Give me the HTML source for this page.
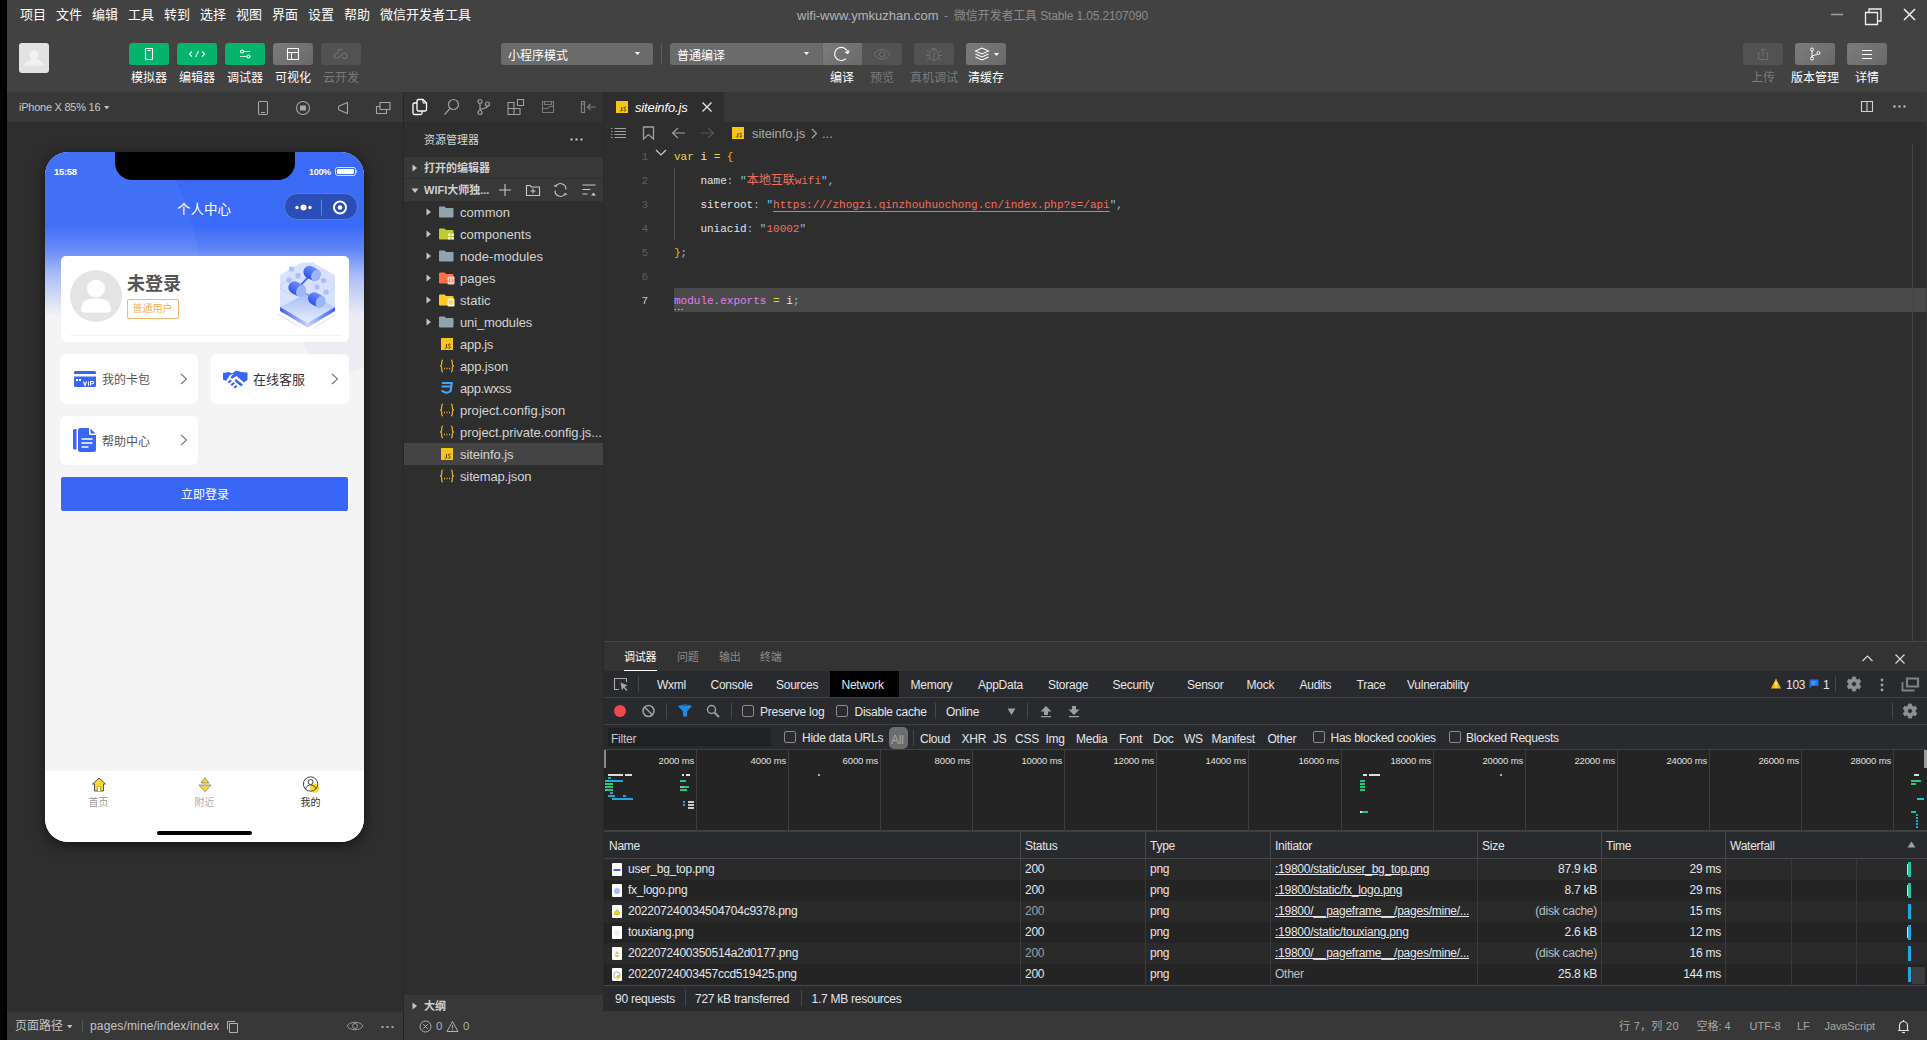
<!DOCTYPE html>
<html lang="zh-CN">
<head>
<meta charset="utf-8">
<title>微信开发者工具</title>
<style>
*{box-sizing:border-box;margin:0;padding:0}
html,body{width:1927px;height:1040px;overflow:hidden;background:#000}
body{font-family:"Liberation Sans","Noto Sans CJK SC",sans-serif;font-size:12px;color:#fff;position:relative}
.abs,.abs>*{position:absolute}
.t{position:absolute;white-space:nowrap;line-height:1}
svg{position:absolute;overflow:visible}
#win{position:absolute;left:0;top:0;width:1927px;height:1040px;background:#424242;overflow:hidden}
/* ---- top bars ---- */
#menu .t{top:8px;font-size:13px;color:#fff}
.tb{position:absolute;top:43px;width:40px;height:22px;border-radius:3px;background:#04b36c}
.tb.g{background:linear-gradient(135deg,#7b7b7b,#6a6a6a)}
.tb.d{background:#525252}
.tl{position:absolute;top:72px;font-size:12px;line-height:13px;color:#fff;white-space:nowrap;text-align:center;width:60px}
.tl.d{color:#7a7a7a}
.sel{position:absolute;top:43px;height:22px;background:#6b6b6b;border-radius:3px}
.sel .t{left:7px;top:7px;font-size:12px;color:#fff}
/* ---- simulator ---- */
#blk{position:absolute;left:0;top:0;width:7px;height:1040px;background:#000;z-index:50}
#simhead{position:absolute;left:0;top:92px;width:403px;height:30px;background:#383838}
#simbody{position:absolute;left:0;top:122px;width:403px;height:890px;background:#2e2e2e}
#simfoot{position:absolute;left:0;top:1012px;width:403px;height:28px;background:#383838}
#vsplit{position:absolute;left:403px;top:92px;width:1px;height:948px;background:#262626}

#phone{position:absolute;left:45px;top:152px;width:319px;height:690px;border-radius:23px;overflow:hidden;background:#f4f4f4;box-shadow:0 3px 14px rgba(0,0,0,.6)}
#pbg{position:absolute;left:0;top:0;width:319px;height:80px;background:#3a6af6}
#pgrad{position:absolute;left:0;top:74px;width:319px;height:90px;background:linear-gradient(#3a6af6 0%,#5f84f6 25%,#a9bcf6 55%,#f4f4f4 100%)}
#notch{position:absolute;left:70px;top:0;width:180px;height:28px;background:#000;border-radius:0 0 17px 17px}
#capsule{position:absolute;left:239px;top:41px;width:74px;height:27px;border-radius:14px;background:#2a4db8;border:1px solid #5c7cd6}
#ptab{position:absolute;left:0;top:619px;width:319px;height:71px;background:#fff}
#homebar{position:absolute;left:112px;top:679px;width:95px;height:4px;border-radius:2px;background:#000}
.pc{position:absolute;background:#fff;border-radius:6px}

/* ---- explorer ---- */
#exicons{position:absolute;left:404px;top:92px;width:199px;height:30px;background:#333}
#exbody{position:absolute;left:404px;top:122px;width:199px;height:890px;background:#2e2e2e}
#exline{position:absolute;left:603px;top:92px;width:1px;height:920px;background:#2b2b2b}
.exsec{position:absolute;left:404px;width:199px;height:22px;background:#383838}
.exsec .t{left:20px;top:6px;font-size:11px;font-weight:bold;color:#d0d0d0}
.fr{position:absolute;left:404px;width:199px;height:22px}
.fr .t{left:56px;top:4.500px;font-size:13px;color:#d4d4d4;letter-spacing:0.050px}
.fr svg.tw{left:22px;top:7px}
.fr svg.ic{left:33.500px;top:3px}

/* ---- editor ---- */
#edtabs{position:absolute;left:604px;top:92px;width:1323px;height:30px;background:#383838}
#edtab{position:absolute;left:604px;top:92px;width:120px;height:30px;background:#2e2e2e}
#edbody{position:absolute;left:604px;top:122px;width:1323px;height:520px;background:#2e2e2e}
.jsi{position:absolute;width:12px;height:12px;background:#f5c518}
.ln{position:absolute;left:620px;margin-top:0.500px;width:28px;text-align:right;font-family:"Liberation Mono",monospace;font-size:11px;line-height:24px;color:#5e5e5e}
.cl{position:absolute;left:674px;margin-top:0.500px;font-family:"Liberation Mono","Noto Sans CJK SC",monospace;font-size:11px;line-height:24px;height:24px;white-space:pre;color:#e4e4e4}
.k{color:#ead23e}.b{color:#f7b500}.s{color:#f2705c}.q{color:#7fc2f8}.m{color:#e77af0}.w{color:#e6e8f4}

/* ---- debugger ---- */
#dbg{position:absolute;left:604px;top:641px;width:1323px;height:371px;background:#202124}
#dbg .t{font-size:12px;color:#e4e6ea;letter-spacing:-0.250px;margin-top:1px}
#dbghead{position:absolute;left:0;top:0;width:1323px;height:30px;background:#333;border-top:1px solid #454545}
.dtrow{position:absolute;left:0;width:1323px;background:#292a2d;border-bottom:1px solid #3f4043}
.vs{position:absolute;width:1px;background:#47484b}
.cb{position:absolute;width:12px;height:12px;border:1px solid #8a8a8a;border-radius:2px;background:#2a2b2e}
.gl{position:absolute;top:109px;width:1px;height:80px;background:#3d3d3d}
.gt{position:absolute;top:113.500px;margin-left:1px;font-size:9.500px !important;color:#e0e0e0 !important;width:80px;text-align:right;letter-spacing:-0.150px !important}
.th{position:absolute;top:190px;height:27px;border-left:1px solid #47484b}
.tr{position:absolute;left:0;width:1323px;height:21px}
.tr .t{top:3px}
.fi{position:absolute;left:8px;top:4px;width:10px;height:13px;overflow:hidden;background:#fff;border-radius:1px}
</style>
</head>
<body>
<div id="win">
<div id="blk"></div>

<!-- ======= MENU BAR ======= -->
<div id="menu">
<span class="t" style="left:20px">项目</span>
<span class="t" style="left:56px">文件</span>
<span class="t" style="left:92px">编辑</span>
<span class="t" style="left:128px">工具</span>
<span class="t" style="left:164px">转到</span>
<span class="t" style="left:200px">选择</span>
<span class="t" style="left:236px">视图</span>
<span class="t" style="left:272px">界面</span>
<span class="t" style="left:308px">设置</span>
<span class="t" style="left:344px">帮助</span>
<span class="t" style="left:380px">微信开发者工具</span>
</div>
<span class="t" style="left:797px;top:9px;font-size:13px;color:#b4b4b4">wifi-www.ymkuzhan.com</span>
<span class="t" style="left:944px;top:10px;font-size:12px;color:#8a8a8a">-</span>
<span class="t" style="left:954px;top:10px;font-size:12px;color:#8a8a8a;letter-spacing:-0.150px">微信开发者工具 Stable 1.05.2107090</span>
<svg style="left:1825px;top:5px" width="100" height="22" viewBox="0 0 100 22" fill="none" stroke="#efefef" stroke-width="1.5">
<path d="M6 9.5H18" stroke="#9a9a9a" stroke-width="1.6"/>
<path d="M40.500 7.500H52.500V19.500H40.500Z M44 7.500V4H56V16H52.500" stroke-width="1.3"/>
<path d="M79 4L90 15M90 4L79 15"/>
</svg>
<!--TITLE-->

<!-- ======= TOOLBAR ======= -->
<div style="position:absolute;left:19px;top:43px;width:30px;height:30px;border-radius:3px;background:#e2e2e2;overflow:hidden">
<svg style="left:0;top:0" width="30" height="30" viewBox="0 0 30 30"><circle cx="15" cy="11.500" r="4.600" fill="#f1f1f1"/><path d="M5.500 22.500C5.500 18.500 10 18 12.500 15.500H17.500C20 18 24.500 18.500 24.500 22.500Z" fill="#f1f1f1"/></svg></div>
<div class="tb" style="left:129px"><svg style="left:0;top:0" width="40" height="22" viewBox="0 0 40 22" fill="none" stroke="#fff" stroke-width="1.1"><rect x="16.500" y="5.500" width="7" height="11" rx="0.500"/><path d="M18.500 7.500H21.500"/></svg></div>
<div class="tb" style="left:177px"><svg style="left:0;top:0" width="40" height="22" viewBox="0 0 40 22" fill="none" stroke="#fff" stroke-width="1.1"><path d="M15 8.500L12.500 11L15 13.500M25 8.500L27.500 11L25 13.500M21.500 8L18.500 14"/></svg></div>
<div class="tb" style="left:225px"><svg style="left:0;top:0" width="40" height="22" viewBox="0 0 40 22" fill="none" stroke="#fff" stroke-width="1.1"><path d="M18.500 8.500H25M15 13.500H21.500" stroke-opacity="0.75"/><circle cx="17" cy="8.500" r="1.500"/><circle cx="23.500" cy="13.500" r="1.500"/></svg></div>
<div class="tb g" style="left:273px"><svg style="left:0;top:0" width="40" height="22" viewBox="0 0 40 22" fill="none" stroke="#fff" stroke-width="1.1"><rect x="14.500" y="5.500" width="11" height="11" rx="0.500"/><path d="M14.500 9.500H25.500M18.500 9.500V16.500"/></svg></div>
<div class="tb d" style="left:321px"><svg style="left:0;top:0" width="40" height="22" viewBox="0 0 40 22" fill="none" stroke="#727272" stroke-width="1.100" stroke-linecap="round"><path d="M20.500 6.400C18.500 6.200 17 7 16.800 8.800L16.600 10.200C14.500 10.300 13.200 11.200 13.200 12.800C13.200 14.500 14.600 15.300 16 15.300C18.500 15.300 20 12 22 10.600C24 9.400 26 10.600 26 12.800C26 14.800 24.300 15.800 23 15.400C22.300 15.200 22 14.800 22 14.400"/></svg></div>
<span class="tl" style="left:119px">模拟器</span>
<span class="tl" style="left:167px">编辑器</span>
<span class="tl" style="left:215px">调试器</span>
<span class="tl" style="left:263px">可视化</span>
<span class="tl d" style="left:311px">云开发</span>

<div class="sel" style="left:501px;width:152px"><span class="t">小程序模式</span><svg style="left:134px;top:9px" width="6" height="4" viewBox="0 0 6 4"><path d="M0 0H5L2.500 3Z" fill="#fff"/></svg></div>
<div style="position:absolute;left:661px;top:43px;width:1px;height:22px;background:#5a5a5a"></div>
<div class="sel" style="left:670px;width:152px;border-radius:3px 0 0 3px"><span class="t">普通编译</span><svg style="left:134px;top:9px" width="6" height="4" viewBox="0 0 6 4"><path d="M0 0H5L2.500 3Z" fill="#fff"/></svg></div>
<div class="tb g" style="left:822px;width:40px;border-radius:0;border-left:1px solid #646464"><svg style="left:-1px;top:0" width="40" height="22" viewBox="0 0 40 22" fill="none" stroke="#fff" stroke-width="1.100"><path d="M25.800 10A6.600 6.600 0 1 0 24 15.600"/><path d="M23 9L25.800 10.400L27.200 7.600"/></svg></div>
<div class="tb d" style="left:862px;border-radius:0 3px 3px 0"><svg style="left:0;top:0" width="40" height="22" viewBox="0 0 40 22" fill="none" stroke="#6e6e6e" stroke-width="1"><path d="M12.200 11.200C15 4.800 25.200 4.800 28 11.200C25.200 17.600 15 17.600 12.200 11.200Z"/><circle cx="20.100" cy="11.200" r="2.700"/></svg></div>
<div class="tb d" style="left:914px"><svg style="left:0;top:0" width="40" height="22" viewBox="0 0 40 22" fill="none" stroke="#6e6e6e" stroke-width="1"><ellipse cx="20" cy="12" rx="4.700" ry="5.500"/><path d="M17.500 7.200A2.600 2.600 0 0 1 22.500 7.200M20 8V17.500M15.500 9.500L12.500 7.500M24.500 9.500L27.500 7.500M15.300 12.500H12M24.700 12.500H28M15.800 15L12.800 17M24.200 15L27.200 17"/></svg></div>
<div class="tb g" style="left:966px"><svg style="left:0;top:0" width="40" height="22" viewBox="0 0 40 22" fill="none" stroke="#fff" stroke-width="1.1"><path d="M9.500 8L16 5L22.500 8L16 11Z"/><path d="M9.500 11L16 14L22.500 11M9.500 14L16 17L22.500 14"/><path d="M28 10H33L30.500 13Z" fill="#fff" stroke="none"/></svg></div>
<span class="tl" style="left:812px">编译</span>
<span class="tl d" style="left:852px">预览</span>
<span class="tl d" style="left:904px">真机调试</span>
<span class="tl" style="left:956px">清缓存</span>

<div class="tb d" style="left:1743px"><svg style="left:0;top:0" width="40" height="22" viewBox="0 0 40 22" fill="none" stroke="#6e6e6e" stroke-width="1"><path d="M17 9.500H15.500V16.500H24.500V9.500H23M20 13.500V5.500M17.500 8L20 5.500L22.500 8"/></svg></div>
<div class="tb g" style="left:1795px"><svg style="left:0;top:0" width="40" height="22" viewBox="0 0 40 22" fill="none" stroke="#fff" stroke-width="1"><circle cx="17" cy="6.500" r="1.500"/><circle cx="17" cy="15.500" r="1.500"/><circle cx="23.500" cy="10" r="1.500"/><path d="M17 8V14M17 14C17 11.500 22 12.500 22.500 11"/></svg></div>
<div class="tb g" style="left:1847px"><svg style="left:0;top:0" width="40" height="22" viewBox="0 0 40 22" fill="none" stroke="#fff" stroke-width="1.1"><path d="M15 7.500H25M15 11.500H25M15 15.500H25"/></svg></div>
<span class="tl d" style="left:1733px">上传</span>
<span class="tl" style="left:1785px">版本管理</span>
<span class="tl" style="left:1837px">详情</span>
<!--TOOLBAR-->

<!-- ======= SIMULATOR ======= -->
<div id="simhead"></div>
<div id="simbody"></div>
<div id="simfoot"></div>
<div id="vsplit"></div>

<span class="t" style="left:19px;top:102px;font-size:11px;color:#c8c8c8;letter-spacing:-0.250px">iPhone X 85% 16</span>
<svg style="left:104px;top:106px" width="6" height="4" viewBox="0 0 6 4"><path d="M0 0H5.500L2.750 3.500Z" fill="#bdbdbd"/></svg>
<svg style="left:255px;top:99px" width="140" height="18" viewBox="0 0 140 18" fill="none" stroke="#a6a6a6" stroke-width="1.100">
<rect x="3.500" y="2.500" width="9" height="13" rx="1.200"/><path d="M6 13.500H10"/>
<circle cx="48" cy="9" r="6.500"/><rect x="45" y="6.500" width="6" height="5" rx="0.500" fill="#a6a6a6" stroke="none"/>
<path d="M84 7L92.500 3.500V14.500L84 11Q83 9 84 7Z" stroke-linejoin="round"/>
<path d="M125 3.500H135V10.500H125Z M125 7.500H121.500V14.500H131.500V10.500"/>
</svg>
<!-- phone -->
<div id="phone">
 <div id="pbg"></div>
 <div id="pgrad"></div>
 <div style="position:absolute;left:-295px;top:-95px;width:450px;height:450px;border-radius:50%;background:rgba(255,255,255,0.045)"></div>
 <div style="position:absolute;left:255px;top:130px;width:90px;height:90px;border-radius:50%;background:rgba(190,198,235,0.140)"></div>
 <div id="notch"></div>
 <span class="t" style="left:9px;top:15px;font-size:9.500px;font-weight:bold;color:#fff;letter-spacing:-0.300px">15:58</span>
 <span class="t" style="left:264px;top:16px;font-size:9px;font-weight:bold;color:#fff;letter-spacing:-0.300px">100%</span>
 <svg style="left:290px;top:15px" width="26" height="10" viewBox="0 0 26 10"><rect x="0.500" y="0.500" width="20" height="8" rx="2" fill="none" stroke="#fff" stroke-opacity="0.800"/><rect x="2" y="2" width="17" height="5" rx="1" fill="#fff"/><path d="M21.500 3V6C22.500 5.700 22.500 3.300 21.500 3Z" fill="#fff"/></svg>
 <span class="t" style="left:132px;top:51px;font-size:13.500px;color:#fff">个人中心</span>
 <div id="capsule"><svg style="left:0;top:0" width="74" height="27" viewBox="0 0 74 27"><circle cx="12" cy="13.500" r="1.700" fill="#fff"/><circle cx="18.500" cy="13.500" r="3" fill="#fff"/><circle cx="25" cy="13.500" r="1.700" fill="#fff"/><path d="M36.500 5.500V21.500" stroke="#fff" stroke-opacity="0.300"/><circle cx="55" cy="13.500" r="6" fill="none" stroke="#fff" stroke-width="2"/><circle cx="55" cy="13.500" r="2.300" fill="#fff"/></svg></div>

 <div class="pc" style="left:16px;top:104px;width:288px;height:86px;border-radius:5px">
  <div style="position:absolute;left:9px;top:14px;width:52px;height:52px;border-radius:50%;background:#e4e4e4;overflow:hidden"><svg style="left:0;top:0" width="52" height="52" viewBox="0 0 52 52"><circle cx="26" cy="18.500" r="9" fill="#fff"/><path d="M11 40C11 30 18 28.500 26 28.500S41 30 41 40C41 42 39 42.500 37 42.500H15C13 42.500 11 42 11 40Z" fill="#fff"/></svg></div>
  <span class="t" style="left:66px;top:19px;font-size:18px;font-weight:bold;color:#555">未登录</span>
  <div style="position:absolute;left:66px;top:43px;width:52px;height:20px;border:1px solid #f7b76b;border-radius:2px"></div>
  <span class="t" style="left:71.500px;top:48px;font-size:10px;color:#f7ad55">普通用户</span>
  <div style="position:absolute;left:9px;top:79px;width:271px;height:1px;background:#f3f3f3"></div>
  <svg style="left:215px;top:4px" width="62" height="72" viewBox="0 0 62 72">
   <defs><linearGradient id="g2" x1="0" y1="0" x2="0" y2="1"><stop offset="0" stop-color="#6f8df8"/><stop offset="1" stop-color="#2f55ea"/></linearGradient>
   <linearGradient id="g3" x1="0" y1="0" x2="0" y2="1"><stop offset="0" stop-color="#a4baf9"/><stop offset="1" stop-color="#e6edff"/></linearGradient>
   <linearGradient id="g4" x1="0" y1="0" x2="1" y2="0"><stop offset="0" stop-color="#3a60ee"/><stop offset="1" stop-color="#c4d2fc"/></linearGradient>
   <linearGradient id="g5" x1="1" y1="0" x2="0" y2="0"><stop offset="0" stop-color="#3a60ee"/><stop offset="1" stop-color="#c4d2fc"/></linearGradient></defs>
   <path d="M2 54L25 68M60.500 54L38 68" stroke="#dfe6ff" stroke-width="1.200" fill="none"/>
   <path d="M4 15L26 2.500H37L59 15V47L31.500 62L4 47Z" fill="#d5dffc" fill-opacity="0.920"/>
   <ellipse cx="31.500" cy="27" rx="27" ry="9" fill="none" stroke="#bccbfa" stroke-width="0.700"/>
   <path d="M4 47L31.500 33L59 47L31.500 63Z" fill="url(#g3)"/>
   <path d="M4 47L31.500 63V67.500L4 51Z" fill="url(#g4)"/>
   <path d="M59 47L31.500 63V67.500L59 51Z" fill="url(#g5)"/>
   <path d="M36 13.300L21 28.800" stroke="#3f63f0" stroke-width="1.800"/><path d="M21 28.800L40.600 39.800" stroke="#8ea6f8" stroke-width="1.800"/>
   <rect x="13" y="6.5" width="5" height="5" rx="1.500" fill="#a5b9fa" fill-opacity="0.850"/><rect x="19.5" y="13" width="5" height="5" rx="1.500" fill="#a5b9fa" fill-opacity="0.850"/><rect x="10.5" y="17.5" width="5" height="5" rx="1.500" fill="#a5b9fa" fill-opacity="0.850"/><rect x="45" y="18" width="5" height="5" rx="1.500" fill="#a5b9fa" fill-opacity="0.850"/><rect x="38.5" y="24.5" width="5" height="5" rx="1.500" fill="#a5b9fa" fill-opacity="0.850"/><rect x="47.5" y="29.5" width="5" height="5" rx="1.500" fill="#a5b9fa" fill-opacity="0.850"/><g transform="translate(36 13.3) rotate(28)"><rect x="-9" y="-6.200" width="18" height="12.400" rx="6.200" fill="url(#g2)"/><ellipse cx="4.500" cy="0" rx="4.500" ry="6.200" fill="#9fb5fb"/></g><g transform="translate(21 28.8) rotate(28)"><rect x="-9" y="-6.200" width="18" height="12.400" rx="6.200" fill="url(#g2)"/><ellipse cx="4.500" cy="0" rx="4.500" ry="6.200" fill="#9fb5fb"/></g><g transform="translate(40.6 39.8) rotate(28)"><rect x="-9" y="-6.200" width="18" height="12.400" rx="6.200" fill="url(#g2)"/><ellipse cx="4.500" cy="0" rx="4.500" ry="6.200" fill="#9fb5fb"/></g>
  </svg>
 </div>
 <div class="pc" style="left:15px;top:202px;width:138px;height:50px">
  <svg style="left:14px;top:17px" width="22" height="16" viewBox="0 0 22 16"><path d="M1.500 0H20.500A1.500 1.500 0 0 1 22 1.500V3H0V1.500A1.500 1.500 0 0 1 1.500 0Z M0 5.500H22V14.500A1.500 1.500 0 0 1 20.500 16H1.500A1.500 1.500 0 0 1 0 14.500Z" fill="#3a66f5"/><path d="M2 8H4V10H2ZM5 8H7V10H5Z" fill="#fff"/><path d="M9.500 10.500L11 14.500L12.500 10.500M14.500 10.500V14.500M16.500 14.500V10.500H18.500A1 1 0 0 1 18.500 12.700H16.500" fill="none" stroke="#fff" stroke-width="1.100"/></svg>
  <span class="t" style="left:42px;top:20px;font-size:12px;color:#555">我的卡包</span>
  <svg style="left:120px;top:19px" width="8" height="12" viewBox="0 0 8 12"><path d="M1 1L6.500 6L1 11" fill="none" stroke="#777" stroke-width="1.100"/></svg>
 </div>
 <div class="pc" style="left:166px;top:202px;width:138px;height:50px">
  <svg style="left:12px;top:16px" width="25" height="19" viewBox="0 0 25 19"><path d="M0 3L6 2L9 3.500L13 0.500L18 2L24.500 2.500V10L21 12.500L13.500 6L9.500 8.500C8 9 7 7.500 8 6.500L10.500 4L7 5L3 11L0 9.500Z" fill="#3a66f5"/><path d="M4.500 12L7.500 9.500L9 11L6 13.500ZM7.500 14.500L10.500 12L12 13.500L9 16ZM10.500 17L13 15L14.500 16.500L12 18.500ZM13 9L20 14.500L18 16.500L11.500 11Z" fill="#3a66f5"/></svg>
  <span class="t" style="left:42px;top:19px;font-size:13px;color:#333">在线客服</span>
  <svg style="left:120px;top:19px" width="8" height="12" viewBox="0 0 8 12"><path d="M1 1L6.500 6L1 11" fill="none" stroke="#777" stroke-width="1.100"/></svg>
 </div>
 <div class="pc" style="left:15px;top:264px;width:138px;height:49px">
  <svg style="left:13px;top:12px" width="24" height="24" viewBox="0 0 24 24"><path d="M0 2.500A1.500 1.500 0 0 1 1.500 1H3.500V21.500H1.500A1.500 1.500 0 0 1 0 20Z" fill="#3a66f5"/><path d="M5 2A2 2 0 0 1 7 0H16V5.500A1.500 1.500 0 0 0 17.500 7H23V22A2 2 0 0 1 21 24H7A2 2 0 0 1 5 22Z M17.500 0.500L22.500 5.500H18.500A1 1 0 0 1 17.500 4.500Z" fill="#3a66f5"/><path d="M8.500 11H19.500M8.500 15H19.500M8.500 19H15.500" stroke="#fff" stroke-width="1.300"/></svg>
  <span class="t" style="left:42px;top:20px;font-size:12px;color:#555">帮助中心</span>
  <svg style="left:120px;top:18px" width="8" height="12" viewBox="0 0 8 12"><path d="M1 1L6.500 6L1 11" fill="none" stroke="#777" stroke-width="1.100"/></svg>
 </div>
 <div style="position:absolute;left:16px;top:325px;width:287px;height:34px;border-radius:2px;background:#3a66f5"></div>
 <span class="t" style="left:136px;top:337px;font-size:12px;color:#fff">立即登录</span>
 <!--CARD-->
 <div id="ptab">
  <svg style="left:46px;top:6px" width="16" height="16" viewBox="0 0 16 16"><path d="M8 1L14.500 7H12.500V14H3.500V7H1.500Z" fill="#fdd835" stroke="#333" stroke-width="0.800" stroke-linejoin="round"/><path d="M6.500 14V10.500A1.500 1.500 0 0 1 9.500 10.500V14" fill="#fff" stroke="#8a7a20" stroke-width="0.600"/></svg>
  <svg style="left:152px;top:6px" width="16" height="16" viewBox="0 0 16 16"><path d="M8 0.800L12 6H4Z" fill="#fdd835" stroke="#555" stroke-width="0.600" stroke-linejoin="round"/><path d="M2 8H14L8 14.800Z" fill="#fdd835" stroke="#555" stroke-width="0.600" stroke-linejoin="round"/></svg>
  <svg style="left:257px;top:5px" width="20" height="18" viewBox="0 0 20 18"><circle cx="12.500" cy="12.300" r="4.500" fill="#fdd835"/><circle cx="8.600" cy="8" r="7.200" fill="none" stroke="#333" stroke-width="0.900"/><circle cx="8.600" cy="6" r="2.500" fill="none" stroke="#333" stroke-width="0.900"/><path d="M3.500 13C4 10 6.500 9 8.600 9S13 10 13.700 12.500" fill="none" stroke="#333" stroke-width="0.900"/></svg>
  <span class="t" style="left:43.500px;top:27px;font-size:10px;color:#9a9a9a">首页</span>
  <span class="t" style="left:149.500px;top:27px;font-size:10px;color:#aaa">附近</span>
  <span class="t" style="left:255.500px;top:27px;font-size:10px;color:#333">我的</span>
 </div>
 <div id="homebar"></div>
</div>
<!--SIM-->

<!-- ======= EXPLORER ======= -->
<div id="exicons">
<svg style="left:7px;top:6px" width="18" height="18" viewBox="0 0 18 18" fill="none" stroke="#fff" stroke-width="1.300" stroke-linejoin="round"><path d="M6 11.500V3A1.500 1.500 0 0 1 7.500 1.500H12L15.500 5V11.500A1.500 1.500 0 0 1 14 13H7.500A1.500 1.500 0 0 1 6 11.500Z"/><path d="M12 1.500V5H15.500" stroke-width="1"/><path d="M6 5H3.500A1.500 1.500 0 0 0 2 6.500V15A1.500 1.500 0 0 0 3.500 16.500H9.500A1.500 1.500 0 0 0 11 15V13"/></svg>
<svg style="left:39px;top:6px" width="18" height="18" viewBox="0 0 18 18" fill="none" stroke="#a0a0a0" stroke-width="1.200"><circle cx="10.500" cy="6.500" r="5"/><path d="M7 10.500L1.500 16.500"/></svg>
<svg style="left:71px;top:6px" width="18" height="18" viewBox="0 0 18 18" fill="none" stroke="#a0a0a0" stroke-width="1.200"><circle cx="5" cy="3.500" r="2"/><circle cx="5" cy="14.500" r="2"/><circle cx="12.500" cy="6" r="2"/><path d="M5 5.500V12.500M12.500 8C12.500 11 5 10 5 12.500"/></svg>
<svg style="left:102px;top:6px" width="18" height="18" viewBox="0 0 18 18" fill="none" stroke="#a0a0a0" stroke-width="1.100"><path d="M2 4.500H8V16.500H2ZM8 10.500H14V16.500H8M2 10.500H8M11.500 1.500H17.500V7.500H11.500Z"/></svg>
<svg style="left:137px;top:8px" width="14" height="14" viewBox="0 0 14 14" fill="none" stroke="#777" stroke-width="1.100"><path d="M1.500 1.500H12.500V12.500H1.500ZM3.500 1.500V4.500H10.500V1.500M1.500 8.500H6C8 8.500 7.500 6.500 9.500 6.500H12.500"/></svg>
<svg style="left:176px;top:8px" width="16" height="14" viewBox="0 0 16 14" fill="none" stroke="#808080" stroke-width="1.200"><path d="M1.500 1.500H4.500V12.500H1.500ZM1.500 4H4.500M15.500 7H8M10.500 4L7.500 7L10.500 10"/></svg>
</div>
<div id="exbody"></div>
<div id="exline"></div>
<span class="t" style="left:424px;top:135px;font-size:11px;color:#d6d6d6">资源管理器</span>
<svg style="left:570px;top:138px" width="14" height="3" viewBox="0 0 14 3"><path d="M0.500 0.500H2.500V2.500H0.500ZM5.500 0.500H7.500V2.500H5.500ZM10.500 0.500H12.500V2.500H10.500Z" fill="#d0d0d0"/></svg>
<div class="exsec" style="top:157px"><svg style="left:8px;top:7px" width="6" height="8" viewBox="0 0 6 8"><path d="M0.500 0.500L5 4L0.500 7.500Z" fill="#c5c5c5"/></svg><span class="t">打开的编辑器</span></div>
<div style="position:absolute;left:404px;top:178px;width:199px;height:1px;background:#303030"></div>
<div class="exsec" style="top:179px"><svg style="left:7px;top:9px" width="8" height="6" viewBox="0 0 8 6"><path d="M0.500 0.500H7.500L4 5Z" fill="#c5c5c5"/></svg><span class="t">WIFI大师独...</span>
<svg style="left:94px;top:4px" width="100" height="14" viewBox="0 0 100 14" fill="none" stroke="#c8c8c8" stroke-width="1.100"><path d="M7 1V13M1 7H13"/><path d="M28.500 2.500H32L33.500 4H41.500V12.500H28.500ZM35 5.500V10.500M32.500 8H37.500"/><path d="M58 3A5.500 5.500 0 0 1 68 6.500M67 11A5.500 5.500 0 0 1 57 7.500M56 2.500L58 3.500L58.500 1.500M69 11.500L67 10.500L66.500 12.500"/><path d="M84.500 2H97.500M84.500 6.500H92.500M84.500 11H89.500" stroke-width="1"/><path d="M93 12.500H98L95.500 9.500Z" fill="#c8c8c8" stroke="none"/></svg></div>
<div class="fr" style="top:201px"><svg class="tw" width="6" height="8" viewBox="0 0 6 8"><path d="M0.500 0.500L5 4L0.500 7.500Z" fill="#c5c5c5"/></svg><svg class="ic" width="18" height="16" viewBox="0 0 18 16"><path d="M2 2.500H6.500L8 4H14.500A1 1 0 0 1 15.500 5V12.500A1 1 0 0 1 14.500 13.500H2A1 1 0 0 1 1 12.500V3.500A1 1 0 0 1 2 2.500Z" fill="#90a4ae"/></svg><span class="t">common</span></div>
<div class="fr" style="top:223px"><svg class="tw" width="6" height="8" viewBox="0 0 6 8"><path d="M0.500 0.500L5 4L0.500 7.500Z" fill="#c5c5c5"/></svg><svg class="ic" width="18" height="16" viewBox="0 0 18 16"><path d="M2 2.500H6.500L8 4H14.500A1 1 0 0 1 15.500 5V12.500A1 1 0 0 1 14.500 13.500H2A1 1 0 0 1 1 12.500V3.500A1 1 0 0 1 2 2.500Z" fill="#c0ca33"/><path d="M10 7.500H12.500V10H10ZM13.500 7.500H16V10H13.500ZM10 11H12.500V13.500H10ZM13.500 11H16V13.500H13.500Z" fill="#f0f4c3"/></svg><span class="t">components</span></div>
<div class="fr" style="top:245px"><svg class="tw" width="6" height="8" viewBox="0 0 6 8"><path d="M0.500 0.500L5 4L0.500 7.500Z" fill="#c5c5c5"/></svg><svg class="ic" width="18" height="16" viewBox="0 0 18 16"><path d="M2 2.500H6.500L8 4H14.500A1 1 0 0 1 15.500 5V12.500A1 1 0 0 1 14.500 13.500H2A1 1 0 0 1 1 12.500V3.500A1 1 0 0 1 2 2.500Z" fill="#90a4ae"/></svg><span class="t">node-modules</span></div>
<div class="fr" style="top:267px"><svg class="tw" width="6" height="8" viewBox="0 0 6 8"><path d="M0.500 0.500L5 4L0.500 7.500Z" fill="#c5c5c5"/></svg><svg class="ic" width="18" height="16" viewBox="0 0 18 16"><path d="M2 2.500H6.500L8 4H14.500A1 1 0 0 1 15.500 5V12.500A1 1 0 0 1 14.500 13.500H2A1 1 0 0 1 1 12.500V3.500A1 1 0 0 1 2 2.500Z" fill="#ff7043"/><rect x="9.500" y="6.500" width="7" height="8" rx="1" fill="#ffccbc"/><path d="M12 9L11 10.500L12 12M14 9L15 10.500L14 12" fill="none" stroke="#e64a19" stroke-width="0.700"/></svg><span class="t">pages</span></div>
<div class="fr" style="top:289px"><svg class="tw" width="6" height="8" viewBox="0 0 6 8"><path d="M0.500 0.500L5 4L0.500 7.500Z" fill="#c5c5c5"/></svg><svg class="ic" width="18" height="16" viewBox="0 0 18 16"><path d="M2 2.500H6.500L8 4H14.500A1 1 0 0 1 15.500 5V12.500A1 1 0 0 1 14.500 13.500H2A1 1 0 0 1 1 12.500V3.500A1 1 0 0 1 2 2.500Z" fill="#ffca28"/><rect x="9.500" y="6.500" width="7" height="8" rx="1" fill="#fff3c4"/><path d="M11 9H15M11 10.500H15M11 12H15" stroke="#f9a825" stroke-width="0.700"/></svg><span class="t">static</span></div>
<div class="fr" style="top:311px"><svg class="tw" width="6" height="8" viewBox="0 0 6 8"><path d="M0.500 0.500L5 4L0.500 7.500Z" fill="#c5c5c5"/></svg><svg class="ic" width="18" height="16" viewBox="0 0 18 16"><path d="M2 2.500H6.500L8 4H14.500A1 1 0 0 1 15.500 5V12.500A1 1 0 0 1 14.500 13.500H2A1 1 0 0 1 1 12.500V3.500A1 1 0 0 1 2 2.500Z" fill="#90a4ae"/></svg><span class="t" style="letter-spacing:-0.15px">uni_modules</span></div>
<div class="fr" style="top:333px"><svg class="ic" width="18" height="16" viewBox="0 0 18 16"><rect x="3" y="2" width="12" height="12" fill="#f5c518"/><path d="M8.500 8V11.500C8.500 12.500 7 12.500 6.800 11.800M12.500 8.500C11.500 7.500 10 8.300 10.500 9.300S12.500 10.500 12.300 11.500S10.500 12.500 10 11.500" fill="none" stroke="#3a3000" stroke-width="0.900"/></svg><span class="t" style="letter-spacing:-0.28px">app.js</span></div>
<div class="fr" style="top:355px"><svg class="ic" width="18" height="16" viewBox="0 0 18 16" fill="none" stroke="#f0b429" stroke-width="1.200"><path d="M5 2C3 2 4 6 3.500 7C3.200 7.800 2 8 2 8S3.200 8.200 3.500 9C4 10 3 14 5 14M13 2C15 2 14 6 14.500 7C14.800 7.800 16 8 16 8S14.800 8.200 14.500 9C14 10 15 14 13 14"/><path d="M6 10.500H7M8.500 10.500H9.500M11 10.500H12" stroke-width="1.400"/></svg><span class="t" style="letter-spacing:-0.12px">app.json</span></div>
<div class="fr" style="top:377px"><svg class="ic" width="18" height="16" viewBox="0 0 18 16"><path d="M4 2H15L13.500 12L8.500 14L3.500 12L3.200 10H5.500L5.700 10.800L8.500 11.800L11.500 10.800L12 7.500H3.500L3.800 5.500H12.300L12.500 4H3.700Z" fill="#42a5f5"/></svg><span class="t" style="letter-spacing:-0.39px">app.wxss</span></div>
<div class="fr" style="top:399px"><svg class="ic" width="18" height="16" viewBox="0 0 18 16" fill="none" stroke="#f0b429" stroke-width="1.200"><path d="M5 2C3 2 4 6 3.500 7C3.200 7.800 2 8 2 8S3.200 8.200 3.500 9C4 10 3 14 5 14M13 2C15 2 14 6 14.500 7C14.800 7.800 16 8 16 8S14.800 8.200 14.500 9C14 10 15 14 13 14"/><path d="M6 10.500H7M8.500 10.500H9.500M11 10.500H12" stroke-width="1.400"/></svg><span class="t" style="letter-spacing:0.03px">project.config.json</span></div>
<div class="fr" style="top:421px"><svg class="ic" width="18" height="16" viewBox="0 0 18 16" fill="none" stroke="#f0b429" stroke-width="1.200"><path d="M5 2C3 2 4 6 3.500 7C3.200 7.800 2 8 2 8S3.200 8.200 3.500 9C4 10 3 14 5 14M13 2C15 2 14 6 14.500 7C14.800 7.800 16 8 16 8S14.800 8.200 14.500 9C14 10 15 14 13 14"/><path d="M6 10.500H7M8.500 10.500H9.500M11 10.500H12" stroke-width="1.400"/></svg><span class="t" style="letter-spacing:-0.07px">project.private.config.js...</span></div>
<div class="fr" style="left:404px;top:443px;background:#444"><svg class="ic" width="18" height="16" viewBox="0 0 18 16"><rect x="3" y="2" width="12" height="12" fill="#f5c518"/><path d="M8.500 8V11.500C8.500 12.500 7 12.500 6.800 11.800M12.500 8.500C11.500 7.500 10 8.300 10.500 9.300S12.500 10.500 12.300 11.500S10.500 12.500 10 11.500" fill="none" stroke="#3a3000" stroke-width="0.900"/></svg><span class="t" style="letter-spacing:-0.07px">siteinfo.js</span></div>
<div class="fr" style="top:465px"><svg class="ic" width="18" height="16" viewBox="0 0 18 16" fill="none" stroke="#f0b429" stroke-width="1.200"><path d="M5 2C3 2 4 6 3.500 7C3.200 7.800 2 8 2 8S3.200 8.200 3.500 9C4 10 3 14 5 14M13 2C15 2 14 6 14.500 7C14.800 7.800 16 8 16 8S14.800 8.200 14.500 9C14 10 15 14 13 14"/><path d="M6 10.500H7M8.500 10.500H9.500M11 10.500H12" stroke-width="1.400"/></svg><span class="t" style="letter-spacing:-0.13px">sitemap.json</span></div>
<div class="exsec" style="top:995px;height:17px"><svg style="left:8px;top:7px" width="6" height="8" viewBox="0 0 6 8"><path d="M0.500 0.500L5 4L0.500 7.500Z" fill="#c5c5c5"/></svg><span class="t" style="top:6px">大纲</span></div>
<!--EXPLORER-->

<!-- ======= EDITOR ======= -->
<div id="edtabs"></div><div id="edtab"></div><div id="edbody"></div>
<div class="jsi" style="left:616px;top:101px"><svg style="left:0;top:0" width="12" height="12" viewBox="0 0 12 12"><path d="M5.800 6V9.300C5.800 10.300 4.500 10.300 4.200 9.600M9.800 6.500C9 5.700 7.600 6.300 8 7.200S9.900 8.200 9.700 9.200S8 10.200 7.500 9.400" fill="none" stroke="#3a3000" stroke-width="0.900"/></svg></div>
<span class="t" style="left:635px;top:101px;font-size:13px;font-style:italic;color:#fff;letter-spacing:-0.150px">siteinfo.js</span>
<svg style="left:702px;top:102px" width="10" height="10" viewBox="0 0 10 10"><path d="M0.500 0.500L9.500 9.500M9.500 0.500L0.500 9.500" stroke="#e8e8e8" stroke-width="1.300"/></svg>
<svg style="left:1860px;top:100px" width="14" height="13" viewBox="0 0 14 13" fill="none" stroke="#d0d0d0" stroke-width="1.100"><path d="M1.500 1.500H12.500V11.500H1.500ZM7 1.500V11.500"/></svg>
<svg style="left:1893px;top:105px" width="14" height="3" viewBox="0 0 14 3"><path d="M0.500 0.500H2.500V2.500H0.500ZM5.500 0.500H7.500V2.500H5.500ZM10.500 0.500H12.500V2.500H10.500Z" fill="#d0d0d0"/></svg>
<svg style="left:610px;top:126px" width="110" height="15" viewBox="0 0 110 15" fill="none" stroke="#a0a0a0" stroke-width="1.100">
<path d="M1 2.500H2.500M4.500 2.500H16M1 5.500H2.500M4.500 5.500H16M1 8.500H2.500M4.500 8.500H16M1 11.500H2.500M4.500 11.500H16" stroke-width="1"/>
<path d="M33.500 1H43.500V13L38.500 8.500L33.500 13Z" stroke-width="1.300"/>
<path d="M75 7H63M68 2L62.500 7L68 12"/>
<path d="M91 7H103M98 2L103.500 7L98 12" stroke="#585858"/>
</svg>
<div class="jsi" style="left:732px;top:127px"><svg style="left:0;top:0" width="12" height="12" viewBox="0 0 12 12"><path d="M5.800 6V9.300C5.800 10.300 4.500 10.300 4.200 9.600M9.800 6.500C9 5.700 7.600 6.300 8 7.200S9.900 8.200 9.700 9.200S8 10.200 7.500 9.400" fill="none" stroke="#3a3000" stroke-width="0.900"/></svg></div>
<span class="t" style="left:752px;top:127px;font-size:13px;color:#a9a9a9;letter-spacing:-0.100px">siteinfo.js</span>
<svg style="left:811px;top:128px" width="7" height="11" viewBox="0 0 7 11"><path d="M1 1L5.500 5.500L1 10" fill="none" stroke="#a9a9a9" stroke-width="1.100"/></svg>
<span class="t" style="left:822px;top:127px;font-size:13px;color:#a9a9a9">...</span>
<div style="position:absolute;left:674px;top:288px;width:1253px;height:24px;background:#4a4a4a"></div>
<div style="position:absolute;left:674px;top:168px;width:1px;height:72px;background:#505050"></div>
<svg style="left:655px;top:149px" width="12" height="7" viewBox="0 0 12 7"><path d="M1 1L6 6L11 1" fill="none" stroke="#c8d0e0" stroke-width="1.100"/></svg>
<span class="ln" style="top:144px">1</span><span class="cl" style="top:144px"><span class="k">var</span> <span class="w">i</span> <span class="k">=</span> <span class="b">{</span></span>
<span class="ln" style="top:168px">2</span><span class="cl" style="top:168px">    name<span class="q">: "</span><span class="s"><span style="font-size:12px">本地互联</span>wifi</span><span class="q">",</span></span>
<span class="ln" style="top:192px">3</span><span class="cl" style="top:192px">    siteroot<span class="q">: "</span><span class="s" style="text-decoration:underline;text-underline-offset:3px">https:///zhogzi.qinzhouhuochong.cn/index.php?s=/api</span><span class="q">",</span></span>
<span class="ln" style="top:216px">4</span><span class="cl" style="top:216px">    uniacid<span class="q">: "</span><span class="s">10002</span><span class="q">"</span></span>
<span class="ln" style="top:240px">5</span><span class="cl" style="top:240px"><span class="b">}</span><span class="q">;</span></span>
<span class="ln" style="top:264px">6</span><span class="cl" style="top:264px"></span>
<span class="ln" style="top:288px;color:#c6c6c6">7</span><span class="cl" style="top:288px"><span class="m">module</span><span class="q">.</span><span class="m">exports</span> <span class="k">=</span> <span class="w">i</span><span class="q">;</span></span>
<svg style="left:674px;top:309px" width="12" height="2" viewBox="0 0 12 2"><path d="M0.500 0.500H2M4 0.500H5.500M7.500 0.500H9" stroke="#bdbdbd" stroke-width="1.200"/></svg>
<div style="position:absolute;left:1912px;top:144px;width:1px;height:498px;background:#454545"></div>

<div style="position:absolute;left:1926px;top:92px;width:1px;height:948px;background:#3a3a3a"></div>
<!--EDITOR-->

<!-- ======= DEBUGGER ======= -->
<div id="dbg">
<div id="dbghead"></div>
<span class="t" style="left:20px;top:10px;font-size:11px;color:#fff">调试器</span><div style="position:absolute;left:20px;top:29px;width:33px;height:1px;background:#fff"></div><span class="t" style="left:73px;top:10px;font-size:11px;color:#8c8c8c">问题</span><span class="t" style="left:115px;top:10px;font-size:11px;color:#8c8c8c">输出</span><span class="t" style="left:156px;top:10px;font-size:11px;color:#8c8c8c">终端</span><svg style="left:1258px;top:13px" width="46" height="10" viewBox="0 0 46 10" fill="none" stroke="#d8d8d8" stroke-width="1.200"><path d="M0.500 7L5.500 2L10.500 7M33.500 0.500L42.500 9.500M42.500 0.500L33.500 9.500"/></svg>
<div class="dtrow" style="top:30px;height:27px"></div><div style="position:absolute;left:226px;top:30px;width:69px;height:26px;background:#000"></div><svg style="left:10px;top:36px" width="16" height="16" viewBox="0 0 16 16" fill="none" stroke="#a8a8a8" stroke-width="1.100"><path d="M12.500 5V1.500H0.500V12.500H5"/><path d="M6.500 5.500L13.500 8.500L10.500 9.800L13.500 13L12.500 14L9.500 10.800L8 13.500Z" fill="#a8a8a8" stroke="none"/></svg><div class="vs" style="left:34px;top:35px;height:16px"></div><span class="t" style="left:53px;top:37px;">Wxml</span><span class="t" style="left:106.5px;top:37px;">Console</span><span class="t" style="left:172px;top:37px;">Sources</span><span class="t" style="left:237.5px;top:37px;">Network</span><span class="t" style="left:306.5px;top:37px;">Memory</span><span class="t" style="left:374px;top:37px;">AppData</span><span class="t" style="left:444px;top:37px;">Storage</span><span class="t" style="left:508.5px;top:37px;">Security</span><span class="t" style="left:583px;top:37px;">Sensor</span><span class="t" style="left:642.5px;top:37px;">Mock</span><span class="t" style="left:695.5px;top:37px;">Audits</span><span class="t" style="left:752.5px;top:37px;">Trace</span><span class="t" style="left:803px;top:37px;">Vulnerability</span>
<svg style="left:1166px;top:36px" width="30" height="14" viewBox="0 0 30 14"><path d="M6 1.500L11 11.500H1Z" fill="#f4bd00"/><path d="M6 5V8.300M6 9.300V10.500" stroke="#fff" stroke-width="1.200"/></svg><span class="t" style="left:1182px;top:37px;">103</span><svg style="left:1205px;top:38px" width="10" height="10" viewBox="0 0 10 10"><path d="M0.500 0.500H9.500V7H3L0.500 9.500Z" fill="#1a73e8"/><path d="M2.500 3H7.500M2.500 5H6" stroke="#9cc4f7" stroke-width="0.800"/></svg><span class="t" style="left:1219px;top:37px;">1</span><div class="vs" style="left:1231px;top:35px;height:16px"></div><svg style="left:1242px;top:34.500px" width="16" height="16" viewBox="0 0 16 16"><path d="M9.90 3.05L9.50 0.96L6.50 0.96L6.10 3.05L4.66 3.88L2.65 3.18L1.15 5.78L2.77 7.17L2.77 8.83L1.15 10.22L2.65 12.82L4.66 12.12L6.10 12.95L6.50 15.04L9.50 15.04L9.90 12.95L11.34 12.12L13.35 12.82L14.85 10.22L13.23 8.83L13.23 7.17L14.85 5.78L13.35 3.18L11.34 3.88Z M5.50 8.00A2.50 2.50 0 1 0 10.50 8.00A2.50 2.50 0 1 0 5.50 8.00Z" fill="#8f9093" fill-rule="evenodd" stroke="#8f9093" stroke-width="0.8" stroke-linejoin="round"/></svg><svg style="left:1276px;top:37px" width="4" height="14" viewBox="0 0 4 14" fill="#9aa0a6"><circle cx="2" cy="2" r="1.400"/><circle cx="2" cy="7" r="1.400"/><circle cx="2" cy="12" r="1.400"/></svg><svg style="left:1297px;top:36px" width="18" height="14" viewBox="0 0 18 14" fill="none" stroke="#808184" stroke-width="1.800"><path d="M6 1.500H17V9.500H6Z" stroke-width="2.200"/><path d="M1.500 5V13.500H13.500"/></svg>
<div class="dtrow" style="top:57px;height:27px"></div><svg style="left:8px;top:62px" width="120" height="16" viewBox="0 0 120 16"><circle cx="8" cy="8" r="6" fill="#f0494d"/><circle cx="36.500" cy="8" r="5.500" fill="none" stroke="#9aa0a6" stroke-width="1.600"/><path d="M32.500 4L40.500 12" stroke="#9aa0a6" stroke-width="1.600"/><path d="M66 3H80L75 8.500V13.500H71V8.500Z" fill="#1a8ce8"/><path d="M66.500 3.500C70 1.500 76 1.500 79.500 3.500" fill="none" stroke="#1a8ce8" stroke-width="1.200"/><circle cx="99.500" cy="6.500" r="4" fill="none" stroke="#9aa0a6" stroke-width="1.500"/><path d="M102.500 9.500L107 14" stroke="#9aa0a6" stroke-width="1.800"/></svg><div class="vs" style="left:62px;top:62px;height:16px"></div><div class="vs" style="left:127px;top:62px;height:16px"></div><div class="cb" style="left:138px;top:64px"></div><span class="t" style="left:156px;top:64px;">Preserve log</span><div class="cb" style="left:232px;top:64px"></div><span class="t" style="left:250.5px;top:64px;">Disable cache</span><div class="vs" style="left:331px;top:62px;height:16px"></div><span class="t" style="left:342px;top:64px;">Online</span><svg style="left:403px;top:67px" width="80" height="12" viewBox="0 0 80 12" fill="#9aa0a6"><path d="M0.500 0.500H8.500L4.500 7Z"/><g transform="translate(0 -2)"><path d="M39 0L44.500 5.500H41V9H37V5.500H33.500ZM34 10H44V11.200H34Z"/><path d="M65 0H69V3.500H72.500L67 9L61.500 3.500H65ZM62 10H72V11.200H62Z"/></g></svg><div class="vs" style="left:423px;top:62px;height:16px"></div><div class="vs" style="left:1288px;top:62px;height:16px"></div><svg style="left:1298px;top:61.500px" width="16" height="16" viewBox="0 0 16 16"><path d="M9.90 3.05L9.50 0.96L6.50 0.96L6.10 3.05L4.66 3.88L2.65 3.18L1.15 5.78L2.77 7.17L2.77 8.83L1.15 10.22L2.65 12.82L4.66 12.12L6.10 12.95L6.50 15.04L9.50 15.04L9.90 12.95L11.34 12.12L13.35 12.82L14.85 10.22L13.23 8.83L13.23 7.17L14.85 5.78L13.35 3.18L11.34 3.88Z M5.50 8.00A2.50 2.50 0 1 0 10.50 8.00A2.50 2.50 0 1 0 5.50 8.00Z" fill="#8f9093" fill-rule="evenodd" stroke="#8f9093" stroke-width="0.8" stroke-linejoin="round"/></svg>
<div class="dtrow" style="top:84px;height:25px"></div><div style="position:absolute;left:4px;top:87px;width:163px;height:18px;background:#202124"></div><span class="t" style="left:7px;top:91px;color:#c4c7cc">Filter</span><div class="cb" style="left:180px;top:90px"></div><span class="t" style="left:198px;top:90px;">Hide data URLs</span><div style="position:absolute;left:285px;top:86px;width:19px;height:22px;border-radius:5px;background:#6b6c6f"></div><span class="t" style="left:287px;top:92px;color:#a6a8ab">All</span><div class="vs" style="left:309px;top:89px;height:16px"></div><span class="t" style="left:316px;top:91px;">Cloud</span><span class="t" style="left:357.5px;top:91px;">XHR</span><span class="t" style="left:389px;top:91px;">JS</span><span class="t" style="left:411px;top:91px;">CSS</span><span class="t" style="left:441.5px;top:91px;">Img</span><span class="t" style="left:472px;top:91px;">Media</span><span class="t" style="left:515px;top:91px;">Font</span><span class="t" style="left:549px;top:91px;">Doc</span><span class="t" style="left:580px;top:91px;">WS</span><span class="t" style="left:607.5px;top:91px;">Manifest</span><span class="t" style="left:663.5px;top:91px;">Other</span><div class="cb" style="left:709px;top:90px"></div><span class="t" style="left:726.5px;top:90px;">Has blocked cookies</span><div class="cb" style="left:845px;top:90px"></div><span class="t" style="left:862px;top:90px;">Blocked Requests</span>
<div style="position:absolute;left:0;top:109px;width:1323px;height:80px;background:#242424"></div><div class="gl" style="left:92px"></div><span class="t gt" style="left:9px">2000 ms</span><div class="gl" style="left:184px"></div><span class="t gt" style="left:101px">4000 ms</span><div class="gl" style="left:276px"></div><span class="t gt" style="left:193px">6000 ms</span><div class="gl" style="left:368px"></div><span class="t gt" style="left:285px">8000 ms</span><div class="gl" style="left:460px"></div><span class="t gt" style="left:377px">10000 ms</span><div class="gl" style="left:552px"></div><span class="t gt" style="left:469px">12000 ms</span><div class="gl" style="left:644px"></div><span class="t gt" style="left:561px">14000 ms</span><div class="gl" style="left:737px"></div><span class="t gt" style="left:654px">16000 ms</span><div class="gl" style="left:829px"></div><span class="t gt" style="left:746px">18000 ms</span><div class="gl" style="left:921px"></div><span class="t gt" style="left:838px">20000 ms</span><div class="gl" style="left:1013px"></div><span class="t gt" style="left:930px">22000 ms</span><div class="gl" style="left:1105px"></div><span class="t gt" style="left:1022px">24000 ms</span><div class="gl" style="left:1197px"></div><span class="t gt" style="left:1114px">26000 ms</span><div class="gl" style="left:1289px"></div><span class="t gt" style="left:1206px">28000 ms</span>
<div style="position:absolute;left:0;top:109px;width:2px;height:18px;background:#8a8a8a"></div><div style="position:absolute;left:1320px;top:109px;width:3px;height:18px;background:#9a9a9a"></div><div style="position:absolute;left:0;top:189px;width:1323px;height:2px;background:#3f4043"></div>

<div style="position:absolute;left:4px;top:133px;width:15px;height:2px;background:#ddd"></div><div style="position:absolute;left:21px;top:133px;width:7px;height:2px;background:#ddd"></div><div style="position:absolute;left:4px;top:136px;width:3px;height:2px;background:#2ab"></div><div style="position:absolute;left:1px;top:139px;width:1px;height:2px;background:#c6c"></div><div style="position:absolute;left:2px;top:139px;width:3px;height:2px;background:#2c7"></div><div style="position:absolute;left:5px;top:139px;width:14px;height:2px;background:#1ea7e8"></div><div style="position:absolute;left:1px;top:142px;width:1px;height:2px;background:#ca3"></div><div style="position:absolute;left:2px;top:142px;width:7px;height:2px;background:#2c7"></div><div style="position:absolute;left:1px;top:145px;width:1px;height:2px;background:#ca3"></div><div style="position:absolute;left:2px;top:145px;width:7px;height:2px;background:#2c7"></div><div style="position:absolute;left:1px;top:148px;width:1px;height:2px;background:#ca3"></div><div style="position:absolute;left:2px;top:148px;width:7px;height:2px;background:#2c7"></div><div style="position:absolute;left:6px;top:151px;width:3px;height:2px;background:#77c"></div><div style="position:absolute;left:4px;top:154px;width:7px;height:2px;background:#2ab"></div><div style="position:absolute;left:19px;top:154px;width:3px;height:2px;background:#2ab"></div><div style="position:absolute;left:8px;top:157px;width:21px;height:2px;background:#1ea7e8"></div><div style="position:absolute;left:78px;top:133px;width:2px;height:2px;background:#ddd"></div><div style="position:absolute;left:82px;top:133px;width:4px;height:2px;background:#ddd"></div><div style="position:absolute;left:76px;top:139px;width:6px;height:2px;background:#2c7"></div><div style="position:absolute;left:76px;top:145px;width:4px;height:2px;background:#aaa"></div><div style="position:absolute;left:80px;top:145px;width:5px;height:2px;background:#2c7"></div><div style="position:absolute;left:76px;top:148px;width:7px;height:2px;background:#2c7"></div><div style="position:absolute;left:79px;top:160px;width:2px;height:2px;background:#1ea7e8"></div><div style="position:absolute;left:84px;top:160px;width:6px;height:2px;background:#ccc"></div><div style="position:absolute;left:79px;top:163px;width:2px;height:2px;background:#1ea7e8"></div><div style="position:absolute;left:84px;top:163px;width:6px;height:2px;background:#ccc"></div><div style="position:absolute;left:84px;top:166px;width:6px;height:2px;background:#ccc"></div><div style="position:absolute;left:214px;top:133px;width:2px;height:2px;background:#aaa"></div><div style="position:absolute;left:759px;top:133px;width:4px;height:2px;background:#ddd"></div><div style="position:absolute;left:765px;top:133px;width:11px;height:2px;background:#ddd"></div><div style="position:absolute;left:756px;top:139px;width:5px;height:2px;background:#2c7"></div><div style="position:absolute;left:756px;top:142px;width:5px;height:2px;background:#2c7"></div><div style="position:absolute;left:756px;top:145px;width:5px;height:2px;background:#2c7"></div><div style="position:absolute;left:756px;top:148px;width:5px;height:2px;background:#2c7"></div><div style="position:absolute;left:756px;top:170px;width:2px;height:2px;background:#ddd"></div><div style="position:absolute;left:758px;top:170px;width:6px;height:2px;background:#2c7"></div><div style="position:absolute;left:896px;top:133px;width:2px;height:2px;background:#aaa"></div><div style="position:absolute;left:1310px;top:133px;width:5px;height:2px;background:#ddd"></div><div style="position:absolute;left:1307px;top:139px;width:10px;height:2px;background:#2c7"></div><div style="position:absolute;left:1307px;top:142px;width:5px;height:2px;background:#2c7"></div><div style="position:absolute;left:1313px;top:157px;width:7px;height:2px;background:#1cc"></div><div style="position:absolute;left:1307px;top:170px;width:5px;height:2px;background:#2c7"></div><div style="position:absolute;left:1312px;top:173px;width:2px;height:2px;background:#1ea7e8"></div><div style="position:absolute;left:1312px;top:176px;width:2px;height:2px;background:#1ea7e8"></div><div style="position:absolute;left:1312px;top:179px;width:2px;height:2px;background:#1ea7e8"></div><div style="position:absolute;left:1312px;top:182px;width:2px;height:2px;background:#1ea7e8"></div><div style="position:absolute;left:1312px;top:185px;width:2px;height:2px;background:#1ea7e8"></div>
<div style="position:absolute;left:0;top:189px;width:1323px;height:2px;background:#3f4043"></div><div style="position:absolute;left:0;top:191px;width:1323px;height:26px;background:#292a2d"></div><div style="position:absolute;left:0;top:217px;width:1323px;height:1px;background:#47484b"></div><span class="t" style="left:5px;top:198px;">Name</span><div class="vs" style="left:416px;top:191px;height:152px"></div><span class="t" style="left:421px;top:198px;">Status</span><div class="vs" style="left:541px;top:191px;height:152px"></div><span class="t" style="left:546px;top:198px;">Type</span><div class="vs" style="left:666px;top:191px;height:152px"></div><span class="t" style="left:671px;top:198px;">Initiator</span><div class="vs" style="left:873px;top:191px;height:152px"></div><span class="t" style="left:878px;top:198px;">Size</span><div class="vs" style="left:997px;top:191px;height:152px"></div><span class="t" style="left:1002px;top:198px;">Time</span><div class="vs" style="left:1121px;top:191px;height:152px"></div><span class="t" style="left:1126px;top:198px;">Waterfall</span><svg style="left:1303px;top:200px" width="9" height="7" viewBox="0 0 9 7"><path d="M4.500 0.500L8.500 6.500H0.500Z" fill="#9aa0a6"/></svg>
<div class="tr" style="top:218px;background:#2a2a2b"><div class="fi"><svg style="left:0;top:0" width="10" height="14" viewBox="0 0 10 14"><rect x="1.500" y="6" width="7" height="2" fill="#3a66f5"/></svg></div><span class="t" style="left:24px">user_bg_top.png</span><span class="t" style="left:421px;">200</span><span class="t" style="left:546px">png</span><span class="t" style="left:671px;text-decoration:underline">:19800/static/user_bg_top.png</span><span class="t" style="right:330px;">87.9 kB</span><span class="t" style="right:206px">29 ms</span><div style="position:absolute;left:1304px;top:3px;width:3px;height:15px;background:#26c6a0"></div><div style="position:absolute;left:1303px;top:5px;width:1px;height:11px;background:#8fd"></div></div>
<div class="tr" style="top:239px;background:#242425"><div class="fi"><svg style="left:0;top:0" width="10" height="14" viewBox="0 0 10 14"><circle cx="5" cy="7" r="3" fill="#a9bcfa"/></svg></div><span class="t" style="left:24px">fx_logo.png</span><span class="t" style="left:421px;">200</span><span class="t" style="left:546px">png</span><span class="t" style="left:671px;text-decoration:underline">:19800/static/fx_logo.png</span><span class="t" style="right:330px;">8.7 kB</span><span class="t" style="right:206px">29 ms</span><div style="position:absolute;left:1304px;top:3px;width:3px;height:15px;background:#26c6a0"></div><div style="position:absolute;left:1303px;top:5px;width:1px;height:11px;background:#8fd"></div></div>
<div class="tr" style="top:260px;background:#2a2a2b"><div class="fi"><svg style="left:0;top:0" width="10" height="14" viewBox="0 0 10 14"><path d="M5 4L8 7V10H2V7Z" fill="#e8c63a"/></svg></div><span class="t" style="left:24px">202207240034504704c9378.png</span><span class="t" style="left:421px;color:#9aa0a6;">200</span><span class="t" style="left:546px">png</span><span class="t" style="left:671px;text-decoration:underline">:19800/__pageframe__/pages/mine/...</span><span class="t" style="right:330px;color:#bdc1c6;">(disk cache)</span><span class="t" style="right:206px">15 ms</span><div style="position:absolute;left:1304px;top:3px;width:3px;height:15px;background:#1ea7e8"></div></div>
<div class="tr" style="top:281px;background:#242425"><div class="fi"><svg style="left:0;top:0" width="10" height="14" viewBox="0 0 10 14"><circle cx="5" cy="7" r="3" fill="#eee"/></svg></div><span class="t" style="left:24px">touxiang.png</span><span class="t" style="left:421px;">200</span><span class="t" style="left:546px">png</span><span class="t" style="left:671px;text-decoration:underline">:19800/static/touxiang.png</span><span class="t" style="right:330px;">2.6 kB</span><span class="t" style="right:206px">12 ms</span><div style="position:absolute;left:1304px;top:3px;width:3px;height:15px;background:#1ea7e8"></div><div style="position:absolute;left:1303px;top:5px;width:1px;height:11px;background:#ddd"></div></div>
<div class="tr" style="top:302px;background:#2a2a2b"><div class="fi"><svg style="left:0;top:0" width="10" height="14" viewBox="0 0 10 14"><path d="M5 4L7.500 7H2.500ZM2.500 8H7.500L5 11Z" fill="#e8c63a"/></svg></div><span class="t" style="left:24px">2022072400350514a2d0177.png</span><span class="t" style="left:421px;color:#9aa0a6;">200</span><span class="t" style="left:546px">png</span><span class="t" style="left:671px;text-decoration:underline">:19800/__pageframe__/pages/mine/...</span><span class="t" style="right:330px;color:#bdc1c6;">(disk cache)</span><span class="t" style="right:206px">16 ms</span><div style="position:absolute;left:1304px;top:3px;width:3px;height:15px;background:#1ea7e8"></div></div>
<div class="tr" style="top:323px;background:#242425"><div class="fi"><svg style="left:0;top:0" width="10" height="14" viewBox="0 0 10 14"><circle cx="5" cy="7" r="3.200" fill="none" stroke="#999" stroke-width="0.800"/><circle cx="6.500" cy="8.500" r="2" fill="#e8c63a"/></svg></div><span class="t" style="left:24px">20220724003457ccd519425.png</span><span class="t" style="left:421px;">200</span><span class="t" style="left:546px">png</span><span class="t" style="left:671px;color:#bdc1c6">Other</span><span class="t" style="right:330px;">25.8 kB</span><span class="t" style="right:206px">144 ms</span><div style="position:absolute;left:1304px;top:3px;width:3px;height:15px;background:#1ea7e8"></div></div>
<div style="position:absolute;left:1187px;top:218px;width:1px;height:126px;background:#38393c"></div><div style="position:absolute;left:1252px;top:218px;width:1px;height:126px;background:#38393c"></div><div class="vs" style="left:416px;top:218px;height:126px;background:#3a3b3e"></div><div class="vs" style="left:541px;top:218px;height:126px;background:#3a3b3e"></div><div class="vs" style="left:666px;top:218px;height:126px;background:#3a3b3e"></div><div class="vs" style="left:873px;top:218px;height:126px;background:#3a3b3e"></div><div class="vs" style="left:997px;top:218px;height:126px;background:#3a3b3e"></div><div class="vs" style="left:1121px;top:218px;height:126px;background:#3a3b3e"></div><div style="position:absolute;left:1308px;top:326px;width:13px;height:17px;background:#3c3d40"></div><div style="position:absolute;left:0;top:344px;width:1323px;height:26px;background:#292a2d;border-top:1px solid #47484b"></div><span class="t" style="left:11px;top:351px;">90 requests</span><div class="vs" style="left:81px;top:349px;height:16px"></div><span class="t" style="left:91px;top:351px;">727 kB transferred</span><div class="vs" style="left:197px;top:349px;height:16px"></div><span class="t" style="left:207.5px;top:351px;">1.7 MB resources</span><div style="position:absolute;left:0;top:370px;width:1323px;height:1px;background:#383838"></div>
</div>
<!--DEBUG-->

<!-- ======= STATUS BAR ======= -->
<div style="position:absolute;left:404px;top:1012px;width:1523px;height:28px;background:#383838"></div>
<div style="position:absolute;left:604px;top:1011px;width:1323px;height:1px;background:#383838"></div>
<span class="t" style="left:15px;top:1020px;font-size:12px;color:#c4c4c4">页面路径</span>
<svg style="left:67px;top:1025px" width="6" height="4" viewBox="0 0 6 4"><path d="M0 0H5.500L2.750 3.500Z" fill="#bdbdbd"/></svg>
<div style="position:absolute;left:82px;top:1020px;width:1px;height:12px;background:#555"></div>
<span class="t" style="left:90px;top:1020px;font-size:12px;color:#c4c4c4;letter-spacing:0.150px">pages/mine/index/index</span>
<svg style="left:226px;top:1020px" width="13" height="13" viewBox="0 0 13 13" fill="none" stroke="#b0b0b0" stroke-width="1"><path d="M3.500 3.500H11.500V12.500H3.500ZM1.500 9.500V1.500H9"/></svg>
<svg style="left:346px;top:1020px" width="18" height="12" viewBox="0 0 18 12" fill="none" stroke="#9a9a9a" stroke-width="1"><path d="M1 6C4 1 14 1 17 6C14 11 4 11 1 6Z"/><circle cx="9" cy="6" r="2.500"/></svg>
<svg style="left:381px;top:1026px" width="14" height="2" viewBox="0 0 14 2"><path d="M0.500 0H2.500V2H0.500ZM5.500 0H7.500V2H5.500ZM10.500 0H12.500V2H10.500Z" fill="#a8a8a8"/></svg>
<svg style="left:419px;top:1020px" width="52" height="13" viewBox="0 0 52 13" fill="none" stroke="#b0b0b0" stroke-width="1"><circle cx="6.500" cy="6.500" r="5.500"/><path d="M4.200 4.200L8.800 8.800M8.800 4.200L4.200 8.800"/><path d="M33.500 1.500L39 11.500H28ZM33.500 5V8.500M33.500 9.500V10.500"/></svg>
<span class="t" style="left:436px;top:1021px;font-size:11.500px;color:#b0b0b0">0</span>
<span class="t" style="left:463px;top:1021px;font-size:11.500px;color:#b0b0b0">0</span>
<span class="t" style="left:1619px;top:1021px;font-size:11px;color:#a6a6a6;letter-spacing:0.300px">行 7，列 20</span>
<span class="t" style="left:1696.500px;top:1021px;font-size:11px;color:#a6a6a6">空格: 4</span>
<span class="t" style="left:1749.500px;top:1021px;font-size:11px;color:#a6a6a6">UTF-8</span>
<span class="t" style="left:1797px;top:1021px;font-size:11px;color:#a6a6a6">LF</span>
<span class="t" style="left:1824.500px;top:1021px;font-size:11px;color:#a6a6a6;letter-spacing:-0.100px">JavaScript</span>
<svg style="left:1897px;top:1019px" width="13" height="15" viewBox="0 0 13 15" fill="none" stroke="#e0e0e0" stroke-width="1.200"><path d="M1 11.500H12M2.500 11.500V6.500A4 4 0 0 1 10.500 6.500V11.500M6.500 2.500V1"/><path d="M5 13.500H8" /></svg>
<!--STATUS-->

</div>
</body>
</html>
